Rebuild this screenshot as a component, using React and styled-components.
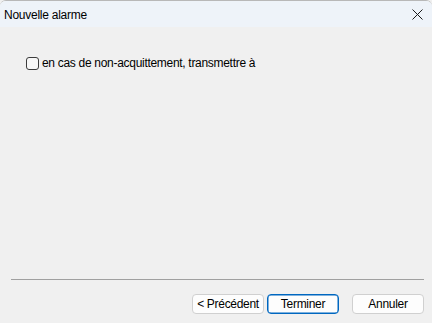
import React, { useState } from "react";
import styled, { createGlobalStyle } from "styled-components";

const GlobalStyle = createGlobalStyle`
  html, body {
    margin: 0;
    padding: 0;
    background: #f0f0f0;
  }
  body {
    font-family: "Liberation Sans", Arial, sans-serif;
    font-size: 12px;
    color: #000;
  }
`;

const Window = styled.div`
  width: 432px;
  height: 323px;
  display: flex;
  flex-direction: column;
  background: #f0f0f0;
  border-top: 1px solid #b8b8b8;
  border-top-left-radius: 6px;
  border-top-right-radius: 6px;
  box-sizing: border-box;
  overflow: hidden;
`;

const TitleBar = styled.div`
  height: 26px;
  display: flex;
  align-items: center;
  justify-content: space-between;
  background: #eef3f9;
  padding: 0 0 0 4px;
`;

const Title = styled.span`
  font-size: 12px;
  letter-spacing: -0.25px;
  padding-top: 1px;
`;

const CloseButton = styled.button`
  width: 46px;
  height: 26px;
  border: none;
  background: transparent;
  display: flex;
  align-items: center;
  justify-content: center;
  padding: 0 0 0 12px;
  margin-right: -2px;
`;

const Body = styled.div`
  flex: 1;
  display: flex;
  flex-direction: column;
  padding: 29px 11px 0 26px;
`;

const CheckRow = styled.label`
  display: flex;
  align-items: center;
  gap: 3px;
  font-size: 12px;
  letter-spacing: -0.3px;
`;

const Box = styled.span`
  width: 11px;
  height: 11px;
  border: 1px solid #3c3c3c;
  border-radius: 3px;
  background: ${(p) => (p.checked ? "#0067c0" : "#f7f7f7")};
  box-sizing: content-box;
`;

const Footer = styled.div`
  display: flex;
  flex-direction: column;
  padding: 0 8px 9px 11px;
`;

const Separator = styled.div`
  height: 1px;
  background: #a0a0a0;
  width: 413px;
`;

const ButtonRow = styled.div`
  display: flex;
  justify-content: flex-end;
  margin-top: 14px;
  gap: 3px;
`;

const Button = styled.button`
  width: 72px;
  height: 20px;
  box-sizing: border-box;
  border: ${(p) => (p.primary ? "1px solid #0067c0" : "1px solid #d0d0d0")};
  box-shadow: ${(p) => (p.primary ? "inset 0 0 0 0.5px #0067c0" : "none")};
  border-radius: 4px;
  background: #fdfdfd;
  font-family: "Liberation Sans", Arial, sans-serif;
  font-size: 12px;
  letter-spacing: -0.3px;
  color: #000;
  padding: 0;
  margin-left: ${(p) => p.gap || 0}px;
`;

export default function App() {
  const [checked, setChecked] = useState(false);

  return (
    <>
      <GlobalStyle />
      <Window>
        <TitleBar>
          <Title>Nouvelle alarme</Title>
          <CloseButton>
            <svg width="11" height="11" viewBox="0 0 11 11">
              <path d="M0.5 0.5 L10.5 10.5 M10.5 0.5 L0.5 10.5" stroke="#1a1a1a" strokeWidth="1" />
            </svg>
          </CloseButton>
        </TitleBar>
        <Body>
          <CheckRow onClick={() => setChecked(!checked)}>
            <Box checked={checked} />
            en cas de non-acquittement, transmettre à
          </CheckRow>
        </Body>
        <Footer>
          <Separator />
          <ButtonRow>
            <Button>&lt; Précédent</Button>
            <Button primary>Terminer</Button>
            <Button gap={10}>Annuler</Button>
          </ButtonRow>
        </Footer>
      </Window>
    </>
  );
}
